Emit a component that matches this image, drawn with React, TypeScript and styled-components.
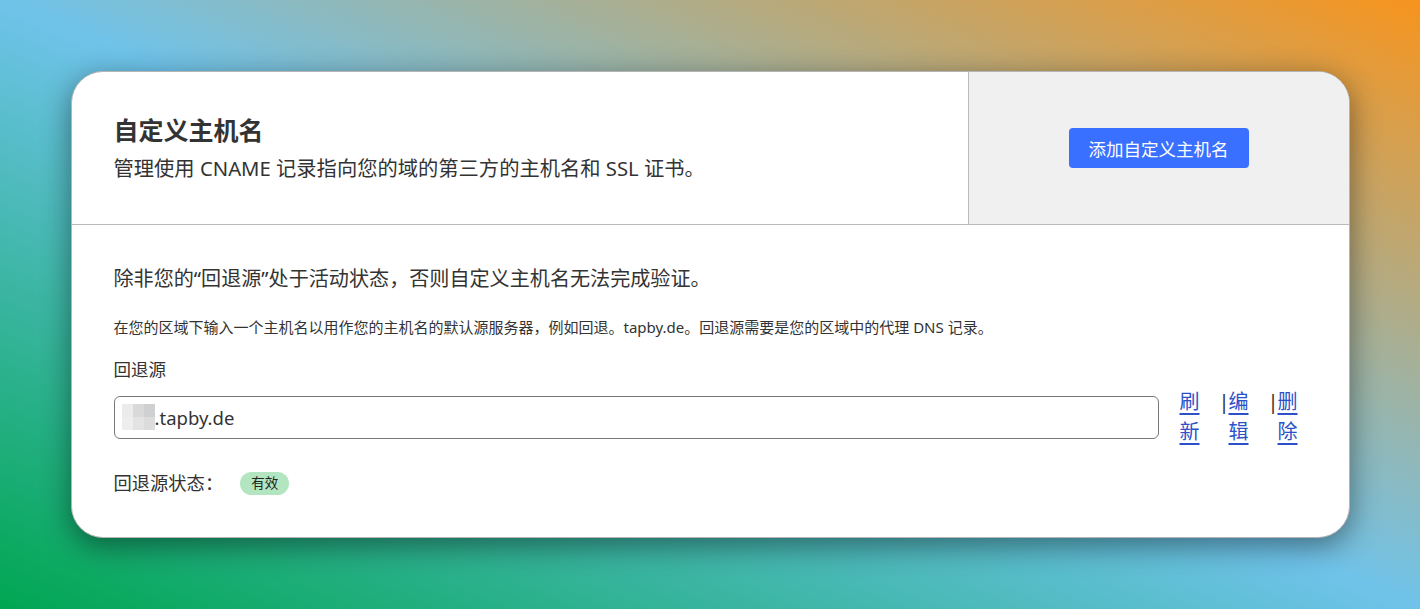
import React from "react";
import styled, { createGlobalStyle } from "styled-components";

const GlobalStyle = createGlobalStyle`
  html, body {
    margin: 0;
    padding: 0;
  }
  body {
    font-family: "Noto Sans", "Noto Sans CJK SC", sans-serif;
    color: #333;
  }
`;

const Backdrop = styled.div`
  width: 100vw;
  height: 609px;
  box-sizing: border-box;
  display: flex;
  align-items: center;
  justify-content: center;
  background: linear-gradient(to bottom left, #f7941d 0%, #6fc3ea 50%, #00a651 100%);
`;

const Card = styled.div`
  width: 1279px;
  height: 467px;
  box-sizing: border-box;
  background: white;
  border: 1px solid #b5b5b5;
  border-radius: 32px;
  overflow: hidden;
  box-shadow: 0 8px 30px rgba(0, 0, 0, 0.45);
  display: flex;
  flex-direction: column;
`;

const Header = styled.header`
  display: flex;
  height: 153px;
  box-sizing: border-box;
  border-bottom: 1px solid #bbb;
`;

const Intro = styled.div`
  flex: 1;
  display: flex;
  flex-direction: column;
  justify-content: center;
  padding: 0 42px;
  border-right: 1px solid #bbb;
`;

const Title = styled.h2`
  margin: 0;
  font-size: 25px;
  line-height: 34px;
  font-weight: 700;
  color: #333;
`;

const Subtitle = styled.p`
  margin: 6px 0 0;
  font-size: 20.3px;
  line-height: 30px;
  color: #333;
`;

const ActionPanel = styled.div`
  width: 380px;
  background: #f0f0f0;
  display: flex;
  align-items: center;
  justify-content: center;
`;

const PrimaryButton = styled.button`
  width: 180px;
  height: 40px;
  border: none;
  border-radius: 4px;
  background: #3a70ff;
  color: white;
  font-family: inherit;
  font-size: 17.5px;
  cursor: pointer;
`;

const Body = styled.section`
  flex: 1;
  padding: 40px 51px 0 42px;
`;

const Notice = styled.p`
  margin: 0;
  font-size: 20.1px;
  line-height: 28px;
`;

const Hint = styled.p`
  margin: 24px 0 0;
  font-size: 15px;
  line-height: 20px;
`;

const FieldLabel = styled.div`
  margin-top: 20px;
  font-size: 17.5px;
  line-height: 24px;
`;

const FieldRow = styled.div`
  display: flex;
  align-items: center;
  margin-top: 6px;
`;

const Input = styled.div`
  flex: 1;
  height: 43px;
  box-sizing: border-box;
  border: 1px solid #777;
  border-radius: 6px;
  display: flex;
  align-items: center;
  padding: 0 7px;
  font-size: 18.5px;
`;

const Actions = styled.div`
  display: flex;
  align-items: flex-start;
  margin-left: 21px;
`;

const ActionItem = styled.div<{ $first?: boolean }>`
  display: flex;
  align-items: flex-start;
  margin-left: ${p => (p.$first ? "0" : "19px")};
`;

const Separator = styled.span`
  width: 10px;
  font-size: 20px;
  line-height: 30px;
  color: #333;
`;

const ActionLink = styled.a`
  display: block;
  width: 20px;
  font-size: 20px;
  line-height: 30px;
  color: #2b50c8;
  text-decoration: underline;
  text-decoration-thickness: 2px;
  text-underline-offset: 4px;
  word-break: break-all;
  cursor: pointer;
`;

const StatusRow = styled.div`
  display: flex;
  align-items: center;
  margin-top: 22px;
  font-size: 18.3px;
  line-height: 28px;
`;

const Badge = styled.span`
  margin-left: 17px;
  height: 23px;
  padding: 0 11px;
  border-radius: 12px;
  background: #b3e6c0;
  color: #222;
  font-size: 13.5px;
  line-height: 23px;
`;

const Mosaic = () => (
  <svg width="33" height="26" viewBox="0 0 33 26" style={{ display: "block" }}>
    <rect x="0" y="0" width="11" height="13" fill="#ebebeb" />
    <rect x="11" y="0" width="11" height="13" fill="#d9d9da" />
    <rect x="22" y="0" width="11" height="13" fill="#cfd0d2" />
    <rect x="0" y="13" width="11" height="13" fill="#efeeec" />
    <rect x="11" y="13" width="11" height="13" fill="#e3e3e3" />
    <rect x="22" y="13" width="11" height="13" fill="#dcdcdd" />
  </svg>
);

const actions = ["刷新", "编辑", "删除"];

const App = () => {
  return (
    <>
      <GlobalStyle />
      <Backdrop>
        <Card>
          <Header>
            <Intro>
              <Title>自定义主机名</Title>
              <Subtitle>管理使用 CNAME 记录指向您的域的第三方的主机名和 SSL 证书。</Subtitle>
            </Intro>
            <ActionPanel>
              <PrimaryButton>添加自定义主机名</PrimaryButton>
            </ActionPanel>
          </Header>
          <Body>
            <Notice>除非您的“回退源”处于活动状态，否则自定义主机名无法完成验证。</Notice>
            <Hint>
              在您的区域下输入一个主机名以用作您的主机名的默认源服务器，例如回退。tapby.de。回退源需要是您的区域中的代理 DNS 记录。
            </Hint>
            <FieldLabel>回退源</FieldLabel>
            <FieldRow>
              <Input>
                <Mosaic />
                <span>.tapby.de</span>
              </Input>
              <Actions>
                {actions.map((label, i) => (
                  <ActionItem key={label} $first={i === 0}>
                    {i > 0 && <Separator>|</Separator>}
                    <ActionLink>{label}</ActionLink>
                  </ActionItem>
                ))}
              </Actions>
            </FieldRow>
            <StatusRow>
              回退源状态：
              <Badge>有效</Badge>
            </StatusRow>
          </Body>
        </Card>
      </Backdrop>
    </>
  );
};

export default App;
